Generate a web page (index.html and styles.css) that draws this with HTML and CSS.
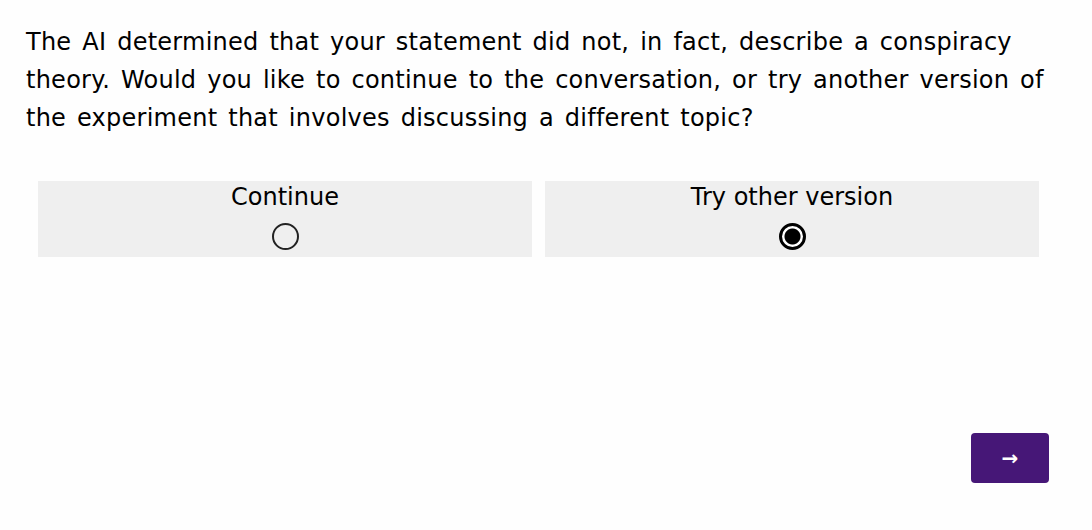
FILE: index.html
```html
<!DOCTYPE html>
<html>
<head>
<meta charset="utf-8">
<link rel="stylesheet" href="styles.css">
</head>
<body>
<div class="page">
  <p class="question">The AI determined that your statement did not, in fact, describe a conspiracy theory. Would you like to continue to the conversation, or try another version of the experiment that involves discussing a different topic?</p>
  <div class="choices">
    <label class="choice">
      <span class="choice-label">Continue</span>
      <span class="radio"></span>
    </label>
    <label class="choice">
      <span class="choice-label">Try other version</span>
      <span class="radio checked"></span>
    </label>
  </div>
  <div class="nav">
    <button class="next">&#8594;</button>
  </div>
</div>
</body>
</html>
```
FILE: styles.css
```css
html, body {
  margin: 0;
  padding: 0;
  background: #fefefe;
}
body {
  font-family: "DejaVu Sans", Verdana, sans-serif;
  color: #000;
}
.page {
  padding: 23px 26px 0 26px;
}
.question {
  margin: 0;
  font-size: 24px;
  line-height: 38px;
  word-spacing: 3px;
  letter-spacing: 0.25px;
}
.choices {
  display: flex;
  gap: 13px;
  margin: 44px 27px 0 12px;
}
.choice {
  flex: 1;
  background: #efefef;
  display: flex;
  flex-direction: column;
  align-items: center;
  height: 76px;
  padding-top: 2px;
  box-sizing: border-box;
}
.choice-label {
  font-size: 24px;
  line-height: 28px;
}
.radio {
  margin-top: 12px;
  width: 27px;
  height: 27px;
  border: 2px solid #222;
  border-radius: 50%;
  box-sizing: border-box;
}
.radio.checked {
  border: 3px solid #000;
  background: radial-gradient(circle, #000 0 7.5px, #fff 8.5px);
}
.nav {
  display: flex;
  justify-content: flex-end;
  margin-top: 176px;
  margin-right: 17px;
}
.next {
  width: 78px;
  height: 50px;
  background: #461777;
  color: #fff;
  border: none;
  border-radius: 4px;
  font-size: 20px;
  font-family: "DejaVu Sans", sans-serif;
  font-weight: bold;
  padding: 0;
}
```
